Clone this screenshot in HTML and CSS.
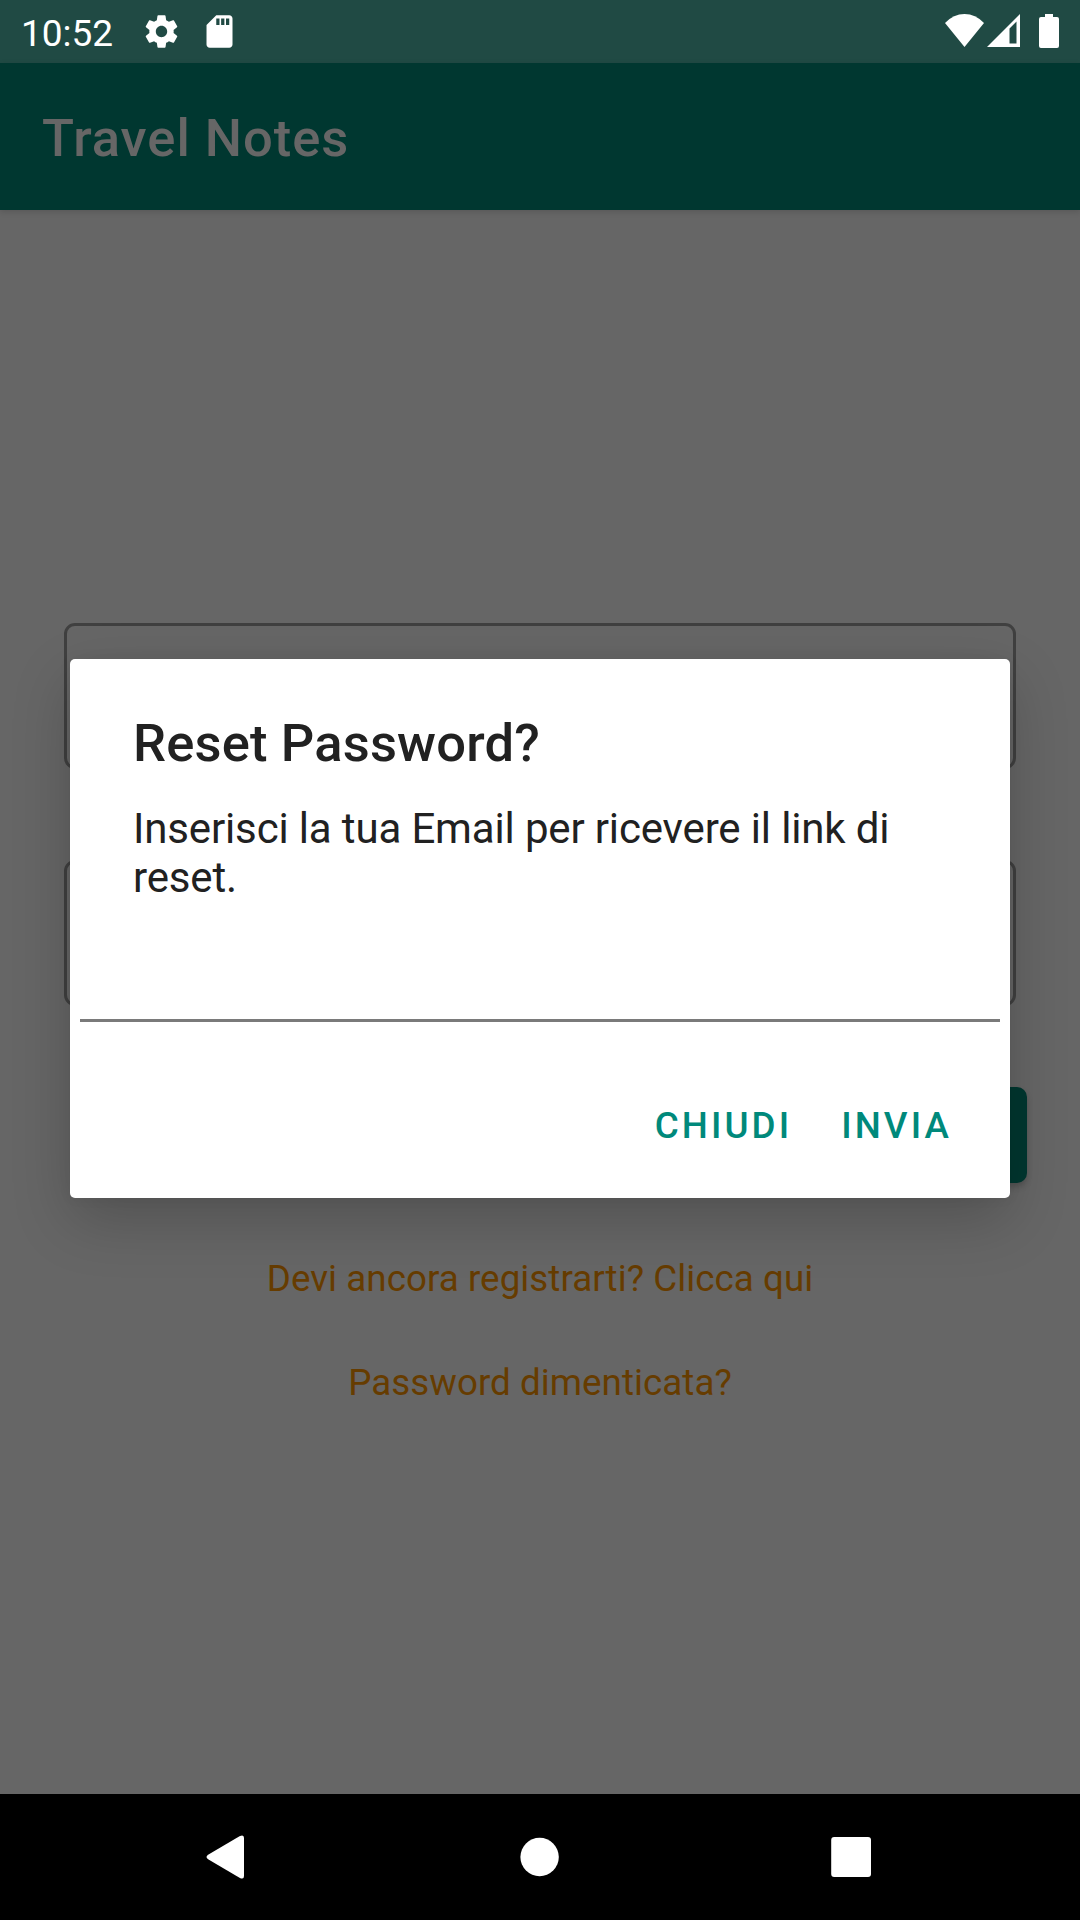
FILE: index.html
```html
<!DOCTYPE html>
<html lang="it">
<head>
<meta charset="utf-8">
<title>Travel Notes</title>
<link rel="stylesheet" href="styles.css">
</head>
<body>
<div class="screen">
  <header class="status-bar">
    <span class="clock">10:52</span>
    <svg class="icon-gear" viewBox="0 0 24 24"><path fill="#fff" d="M19.43 12.98c.04-.32.07-.64.07-.98s-.03-.66-.07-.98l2.11-1.65c.19-.15.24-.42.12-.64l-2-3.46c-.12-.22-.39-.3-.61-.22l-2.49 1c-.52-.4-1.08-.73-1.69-.98l-.38-2.65A.488.488 0 0 0 14 2h-4c-.25 0-.46.18-.49.42l-.38 2.65c-.61.25-1.17.59-1.69.98l-2.49-1c-.23-.09-.49 0-.61.22l-2 3.46c-.13.22-.07.49.12.64l2.11 1.65c-.04.32-.07.65-.07.98s.03.66.07.98l-2.11 1.65c-.19.15-.24.42-.12.64l2 3.46c.12.22.39.3.61.22l2.49-1c.52.4 1.08.73 1.69.98l.38 2.65c.03.24.24.42.49.42h4c.25 0 .46-.18.49-.42l.38-2.65c.61-.25 1.17-.59 1.69-.98l2.49 1c.23.09.49 0 .61-.22l2-3.46c.12-.22.07-.49-.12-.64l-2.11-1.65zM12 15.5c-1.93 0-3.5-1.57-3.5-3.5s1.57-3.5 3.5-3.5 3.5 1.57 3.5 3.5-1.57 3.5-3.5 3.5z"/></svg>
    <svg class="icon-sd" viewBox="0 0 24 24"><path fill="#fff" d="M18 2h-8L4.02 8 4 20c0 1.1.9 2 2 2h12c1.1 0 2-.9 2-2V4c0-1.1-.9-2-2-2zm-6 6h-2V4h2v4zm3 0h-2V4h2v4zm3 0h-2V4h2v4z"/></svg>
    <span class="spacer"></span>
    <svg class="icon-wifi" viewBox="0 0 39 33"><path fill="#fff" d="M19.5 33 0 9Q8.500 0 19.5 0T39 9Z"/></svg>
    <svg class="icon-signal" viewBox="0 0 33 33"><path fill="#fff" fill-rule="evenodd" d="M0 33 33 0V33ZM22.5 14.500V29.500H29.500V7.500Z"/></svg>
    <svg class="icon-battery" viewBox="0 0 20 34"><path fill="#fff" d="M6 0h8v3h4a2 2 0 0 1 2 2v27a2 2 0 0 1-2 2H2a2 2 0 0 1-2-2V5a2 2 0 0 1 2-2h4z"/></svg>
  </header>
  <div class="app-bar"><h1 class="app-title">Travel Notes</h1></div>
  <main class="content">
    <div class="field"></div>
    <div class="field"></div>
    <div class="login"></div>
    <a class="link">Devi ancora registrarti? Clicca qui</a>
    <a class="link link-forgot">Password dimenticata?</a>
  </main>
  <nav class="nav-bar">
    <svg class="nav-icon" viewBox="0 0 42 44"><path fill="#fff" d="M3.500 19.500 34.500 1.300Q39 -1 39 3V41Q39 45 34.500 42.700L3.500 24.500Q-.5 22 3.500 19.500Z"/></svg>
    <svg class="nav-icon" viewBox="0 0 42 44"><circle cx="21.6" cy="22" r="19.200" fill="#fff"/></svg>
    <svg class="nav-icon" viewBox="0 0 42 44"><rect x="1.200" y="2" width="39.800" height="40" rx="3" fill="#fff"/></svg>
  </nav>
  <section class="dialog" role="dialog">
    <h2 class="dialog-title">Reset Password?</h2>
    <p class="dialog-text">Inserisci la tua Email per ricevere il link di reset.</p>
    <div class="dialog-input"></div>
    <div class="dialog-actions"><span>CHIUDI</span><span>INVIA</span></div>
  </section>
</div>
</body>
</html>
```
FILE: styles.css
```css
* { box-sizing: border-box; }
body { margin: 0; font-family: Roboto, "Liberation Sans", sans-serif; }
h1, h2, p { margin: 0; font-weight: 500; }
svg { display: block; flex: none; }
.screen { position: relative; width: 1080px; height: 1920px; display: flex; flex-direction: column; background: #666; overflow: hidden; }
.status-bar { height: 63px; flex: none; display: flex; align-items: center; padding: 0 21px 0 21px; background: #204a44; color: #fff; }
.clock { font-size: 37px; line-height: 44px; width: 122px; padding-top: 4px; }
.icon-gear { width: 39px; height: 39px; margin-left: -1px; }
.icon-sd { width: 39px; height: 39px; margin-left: 19px; }
.spacer { flex: 1; }
.icon-wifi { width: 39px; height: 33px; margin-top: -3px; }
.icon-signal { width: 33px; height: 33px; margin: -3px 19px 0 3px; }
.icon-battery { width: 20px; height: 34px; margin-top: -2px; }
.app-bar { height: 147px; flex: none; display: flex; align-items: center; padding: 3px 42px 0; background: #003730; box-shadow: 0 2px 6px rgba(0,0,0,.14); }
.app-title { font-size: 52.5px; line-height: 62px; letter-spacing: .97px; color: #666; }
.content { flex: 1; display: flex; flex-direction: column; align-items: center; padding-top: 413px; }
.field { width: 952px; height: 146px; margin-bottom: 91px; flex: none; border: 3px solid #404040; border-radius: 11px; }
.login { align-self: flex-end; width: 400px; height: 96px; margin: -10px 53px 0 0; flex: none; border-radius: 10px; background: #003730; box-shadow: 0 4px 6px rgba(0,0,0,.2); }
.link { margin-top: 74px; font-size: 36.75px; line-height: 44px; letter-spacing: .05px; color: #663c00; }
.link-forgot { margin-top: 60px; }
.nav-bar { height: 126px; flex: none; display: flex; justify-content: space-between; padding: 41px 208px 0 205px; background: #000; }
.nav-icon { width: 42px; height: 44px; }
.dialog { position: absolute; left: 70px; top: 659px; width: 940px; height: 539px; padding-top: 53px; background: #fff; border-radius: 5px; color: #212121; box-shadow: 0 22px 60px rgba(0,0,0,.2), 0 0 14px rgba(0,0,0,.05); }
.dialog-title { padding: 0 63px; font-size: 52.5px; line-height: 62px; letter-spacing: .17px; }
.dialog-text { padding: 0 63px; margin-top: 30px; font-size: 42px; line-height: 49px; font-weight: 400; letter-spacing: -.15px; }
.dialog-input { margin: 0 10px; height: 120px; border-bottom: 3px solid #7a7a7a; }
.dialog-actions { display: flex; justify-content: flex-end; gap: 49px; padding: 82px 58px 0; font-size: 36.75px; line-height: 44px; font-weight: 500; letter-spacing: 3.1px; color: #00897b; }
```
